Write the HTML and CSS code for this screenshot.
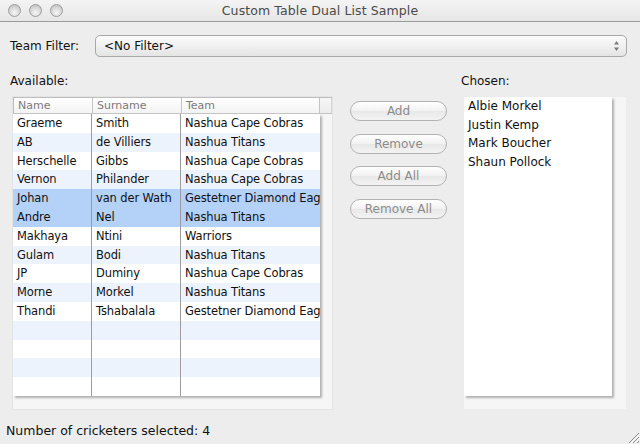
FILE: index.html
```html
<!DOCTYPE html>
<html>
<head>
<meta charset="utf-8">
<link rel="stylesheet" href="styles.css">
</head>
<body>
<div class="window">
  <div class="titlebar">
    <div class="lights">
      <span class="light"></span><span class="light"></span><span class="light"></span>
    </div>
    <div class="title">Custom Table Dual List Sample</div>
  </div>
  <div class="content">
    <div class="filter-row">
      <span class="filter-label">Team Filter:</span>
      <div class="combo">
        <span class="combo-text">&lt;No Filter&gt;</span>
        <span class="stepper">
          <svg width="7" height="12" viewBox="0 0 7 12"><path d="M3.5 1 L6 4.5 L1 4.5 Z M3.5 11 L6 7.5 L1 7.5 Z" fill="#7a7a7a"/></svg>
        </span>
      </div>
    </div>
    <div class="main">
      <div class="left">
        <div class="section-label">Available:</div>
        <div class="pane table-pane">
          <div class="thead">
            <div class="th c1">Name</div>
            <div class="th c2">Surname</div>
            <div class="th c3">Team</div>
            <div class="th corner"></div>
          </div>
          <div class="pane-body">
            <div class="viewport table-view">
              <div class="row"><div class="td c1">Graeme</div><div class="td c2">Smith</div><div class="td c3">Nashua Cape Cobras</div></div>
              <div class="row alt"><div class="td c1">AB</div><div class="td c2">de Villiers</div><div class="td c3">Nashua Titans</div></div>
              <div class="row"><div class="td c1">Herschelle</div><div class="td c2">Gibbs</div><div class="td c3">Nashua Cape Cobras</div></div>
              <div class="row alt"><div class="td c1">Vernon</div><div class="td c2">Philander</div><div class="td c3">Nashua Cape Cobras</div></div>
              <div class="row sel"><div class="td c1">Johan</div><div class="td c2">van der Wath</div><div class="td c3">Gestetner Diamond Eag</div></div>
              <div class="row sel"><div class="td c1">Andre</div><div class="td c2">Nel</div><div class="td c3">Nashua Titans</div></div>
              <div class="row"><div class="td c1">Makhaya</div><div class="td c2">Ntini</div><div class="td c3">Warriors</div></div>
              <div class="row alt"><div class="td c1">Gulam</div><div class="td c2">Bodi</div><div class="td c3">Nashua Titans</div></div>
              <div class="row"><div class="td c1">JP</div><div class="td c2">Duminy</div><div class="td c3">Nashua Cape Cobras</div></div>
              <div class="row alt"><div class="td c1">Morne</div><div class="td c2">Morkel</div><div class="td c3">Nashua Titans</div></div>
              <div class="row"><div class="td c1">Thandi</div><div class="td c2">Tshabalala</div><div class="td c3">Gestetner Diamond Eag</div></div>
              <div class="row alt"><div class="td c1"></div><div class="td c2"></div><div class="td c3"></div></div>
              <div class="row"><div class="td c1"></div><div class="td c2"></div><div class="td c3"></div></div>
              <div class="row alt"><div class="td c1"></div><div class="td c2"></div><div class="td c3"></div></div>
              <div class="row"><div class="td c1"></div><div class="td c2"></div><div class="td c3"></div></div>
              <div class="row alt"><div class="td c1"></div><div class="td c2"></div><div class="td c3"></div></div>
            </div>
          </div>
        </div>
      </div>
      <div class="buttons">
        <div class="btn">Add</div>
        <div class="btn">Remove</div>
        <div class="btn">Add All</div>
        <div class="btn">Remove All</div>
      </div>
      <div class="right">
        <div class="section-label">Chosen:</div>
        <div class="pane list-pane">
          <div class="viewport list-view">
            <div class="item">Albie Morkel</div>
            <div class="item">Justin Kemp</div>
            <div class="item">Mark Boucher</div>
            <div class="item">Shaun Pollock</div>
          </div>
        </div>
      </div>
    </div>
  </div>
  <div class="status">Number of cricketers selected: 4</div>
  <svg class="grip" width="14" height="14" viewBox="0 0 14 14">
    <path d="M13 3 L3 13 M13 7 L7 13 M13 11 L11 13" stroke="#8a8a8a" stroke-width="1"/>
    <path d="M14 4 L4 14 M14 8 L8 14" stroke="#ffffff" stroke-width="1"/>
  </svg>
</div>
</body>
</html>
```
FILE: styles.css
```css
* { box-sizing: border-box; }
html, body { margin: 0; padding: 0; }
body {
  width: 640px;
  height: 444px;
  overflow: hidden;
  font-family: "DejaVu Sans", "Liberation Sans", sans-serif;
  font-size: 12px;
  color: #111;
  background: #ececec;
}
.window {
  position: relative;
  width: 640px;
  height: 444px;
  background: #ededed;
  display: flex;
  flex-direction: column;
}
.titlebar {
  height: 22px;
  flex: none;
  display: flex;
  align-items: center;
  background: linear-gradient(#f4f4f4, #e6e6e6);
  border-bottom: 1px solid #9a9a9a;
}
.lights {
  display: flex;
  gap: 8px;
  padding-left: 8px;
  width: 76px;
}
.light {
  width: 13px;
  height: 13px;
  border-radius: 50%;
  border: 1px solid #9c9c9c;
  background: radial-gradient(circle at 50% 70%, #f6f6f6 0%, #d6d6d6 55%, #b8b8b8 100%);
}
.title {
  flex: 1;
  text-align: center;
  padding-right: 76px;
  font-size: 12.5px;
  color: #4a4a4a;
  letter-spacing: 0.1px;
}
.content {
  padding: 13px 0 0 10px;
}
.filter-row {
  display: flex;
  align-items: center;
  height: 22px;
}
.filter-label {
  width: 85px;
}
.combo {
  width: 532px;
  height: 22px;
  display: flex;
  align-items: center;
  justify-content: space-between;
  border: 1px solid #a8a8a8;
  border-radius: 5px;
  background: linear-gradient(#fbfbfb, #efefef 55%, #e4e4e4);
  padding-left: 8px;
}
.combo-text { color: #111; }
.stepper {
  display: flex;
  align-items: center;
  height: 20px;
  padding: 0 6px;
}
.main {
  display: flex;
  margin-top: 17px;
}
.section-label {
  height: 15px;
  line-height: 15px;
  margin-bottom: 7px;
}
.left { width: 323px; }
.pane {
  background: #f6f6f6;
  border: 1px solid #e4e4e4;
  height: 314px;
}
.table-pane {
  margin-left: 2px;
  width: 321px;
  display: flex;
  flex-direction: column;
}
.thead {
  display: flex;
  height: 17px;
  flex: none;
  background: linear-gradient(#ffffff, #f3f3f3);
  border-top: 1px solid #bdbdbd;
  border-bottom: 1px solid #c4c4c4;
  border-left: 1px solid #bdbdbd;
}
.th {
  font-size: 11px;
  color: #7b7b7b;
  line-height: 15px;
  padding-left: 4px;
  border-right: 1px solid #c4c4c4;
  white-space: nowrap;
  overflow: hidden;
}
.c1 { width: 79px; }
.c2 { width: 89px; }
.c3 { width: 138px; }
.th.corner { flex: 1; border-right: 1px solid #d4d4d4; background: linear-gradient(#f6f6f6, #ececec); }
.pane-body {
  flex: 1;
  min-height: 0;
  padding-right: 13px;
  padding-bottom: 13px;
}
.viewport {
  background: #fff;
  height: 100%;
  box-shadow: 2px 2px 2px rgba(0,0,0,0.28);
  overflow: hidden;
}
.table-view { width: 307px; }
.row {
  display: flex;
  height: 18.8px;
  line-height: 18.8px;
  background: #ffffff;
  font-size: 11.5px;
  letter-spacing: -0.12px;
}
.row.alt { background: #edf3fd; }
.row.sel { background: #b4d1f7; }
.td {
  flex: none;
  padding-left: 4px;
  white-space: nowrap;
  overflow: hidden;
  border-right: 1px solid #9d9d9d;
}
.td.c3 { border-right: none; width: 139px; }
.buttons {
  width: 97px;
  margin-left: 17px;
  padding-top: 27px;
  display: flex;
  flex-direction: column;
  gap: 12.5px;
}
.btn {
  height: 20px;
  border: 1px solid #b2b2b2;
  border-radius: 10px;
  background: linear-gradient(#ffffff, #f1f1f1 50%, #e8e8e8 51%, #f3f3f3);
  color: #8c8c8c;
  text-align: center;
  line-height: 18px;
}
.right { margin-left: 14px; }
.list-pane {
  margin-left: 2px;
  width: 164px;
  padding-right: 14px;
  padding-bottom: 13px;
  border-color: #ececec;
}
.item {
  height: 18.7px;
  line-height: 18.7px;
  padding-left: 4px;
}
.status {
  margin-top: auto;
  padding: 0 0 4px 6px;
  font-size: 12.5px;
  height: 22px;
  line-height: 18px;
}
.grip {
  position: absolute;
  right: 0;
  bottom: 0;
}
```
